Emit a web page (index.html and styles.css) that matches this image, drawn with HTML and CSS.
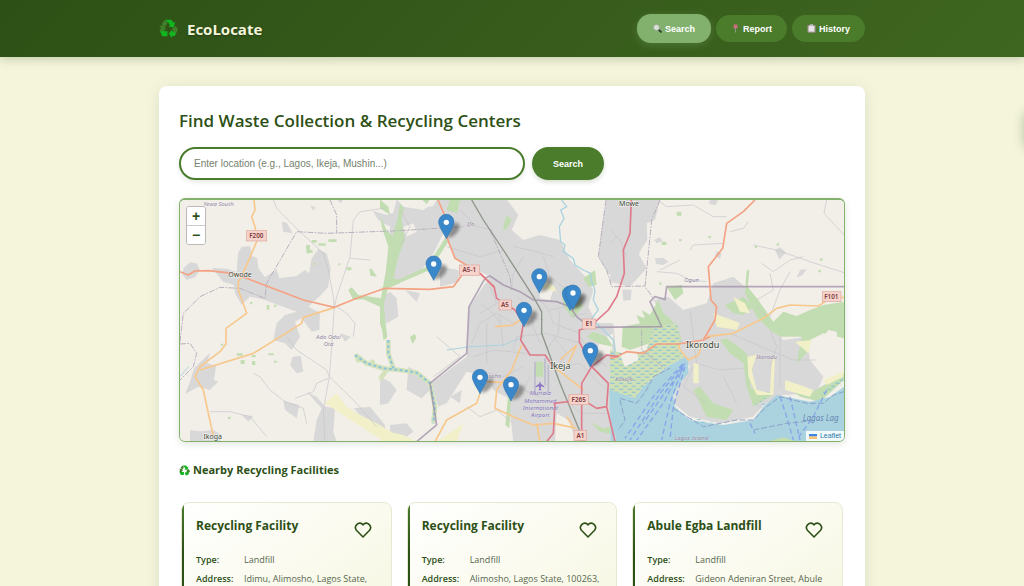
FILE: index.html
```html
<!DOCTYPE html>
<html lang="en">
<head>
<meta charset="utf-8">
<meta name="viewport" content="width=device-width, initial-scale=1">
<title>EcoLocate</title>
<link rel="stylesheet" href="styles.css">
</head>
<body>
<svg class="defs" width="0" height="0" aria-hidden="true">
  <symbol id="recycle" viewBox="0 0 20 20">
    <path fill="#12b51f" d="M6 .8h7l2.200 3.200 2-.8-1.900 5.800-5.400-1 1.700-1.300L9.600 3.600z"/>
    <path class="shade" d="M5.500 1.300 9 3.300 6.900 7.800 3 5.400z"/>
    <path fill="#12b51f" d="M.6 12.200 3.400 18.200h5.500v-5.400H5l1.300-2z"/>
    <path class="shade" d="M.2 7.400 5.500 6.200 7.200 11.500 5.300 10.600 3.800 13.400 1 12.500 1.900 8.600z"/>
    <path fill="#12b51f" d="m10.200 15.400 3.600-4.400v2.100h4.900l-2.100 4.900h-2.800v2z"/>
    <path class="shade" d="m13.700 9.800 4-2.500 2.300 4.200-1.900 2.800h-2.700z"/>
  </symbol>
  <symbol id="heart" viewBox="0 0 24 24">
    <path fill="none" stroke="currentColor" stroke-width="2.100" stroke-linejoin="round" d="M12 21.300 3.200 12.300A5.700 5.700 0 0 1 11.200 4.300L12 5.200l.8-.9a5.700 5.700 0 0 1 8 8z"/>
  </symbol>
</svg>

<div class="page">
  <header class="header">
    <div class="header-inner">
      <div class="logo"><svg class="logo-icon" aria-hidden="true"><use href="#recycle"/></svg><span>EcoLocate</span></div>
      <nav class="nav">
        <button class="nav-btn active" type="button">
          <svg class="emoji" viewBox="0 0 20 20" aria-hidden="true"><path d="m12 12 5.500 5.500" stroke="#2d3a2a" stroke-width="4" stroke-linecap="round"/><circle cx="7.800" cy="7.800" r="6.800" fill="#d9e0d6" stroke="#8c9a88" stroke-width="1.500"/></svg>
          Search</button>
        <button class="nav-btn" type="button">
          <svg class="emoji" viewBox="0 0 20 20" aria-hidden="true"><path d="M10 8v11" stroke="#8fa08a" stroke-width="2"/><path d="M5 1h10l-1.500 3 2 5.500h-11l2-5.500z" fill="#cf6a80"/></svg>
          Report</button>
        <button class="nav-btn" type="button">
          <svg class="emoji" viewBox="0 0 20 20" aria-hidden="true"><rect x="1" y="2" width="18" height="17.500" rx="1.500" fill="#a08d88"/><rect x="3.500" y="4.500" width="13" height="12.500" fill="#e6e6ea"/><rect x="6" y=".5" width="8" height="4" rx="1" fill="#b9bcc0"/></svg>
          History</button>
      </nav>
    </div>
  </header>

  <main class="panel">
    <h1 class="title">Find Waste Collection &amp; Recycling Centers</h1>
    <form class="search">
      <input class="search-input" type="text" aria-label="Location" placeholder="Enter location (e.g., Lagos, Ikeja, Mushin...)">
      <button class="search-btn" type="button">Search</button>
    </form>

    <div class="map">
      <svg class="map-art" viewBox="30 30 1992 723" preserveAspectRatio="xMidYMid slice" role="img" aria-label="Map of facilities around Ikeja">
        <defs>
          <pattern id="marsh" width="26" height="18" patternUnits="userSpaceOnUse"><path d="M1 4h12M14 13h11" stroke="#7fbedc" stroke-width="3"/></pattern>
          <filter id="soft" x="-50%" y="-50%" width="200%" height="200%"><feGaussianBlur stdDeviation="5"/></filter>
          <g id="pin">
            <path d="M0-2 18-44Q34-54 40-38 40-20 18-6z" fill="#333" opacity=".45" filter="url(#soft)"/>
            <path d="M0 0C-3-9-23-35-23-50a23 23 0 0 1 46 0C23-35 3-9 0 0z" fill="#3a88ca" stroke="#2f76b2" stroke-width="2"/>
            <circle cy="-49" r="8" fill="#fff"/>
          </g>
        </defs>
        <rect x="0" y="0" width="2060" height="790" fill="#f2efe9"/>

        <g class="urban">
          <path d="M40 235 60 217 80 220 90 240 75 262 50 270 38 255zM125 234 170 236 200 245 204 190 215 170 240 168 247 198 262 205 265 235 285 262 320 238 328 265 380 258 405 240 417 250 425 205 445 178 470 190 482 235 475 290 450 318 415 350 450 368 448 420 425 425 395 385 375 395 390 440 365 480 345 460 310 450 320 400 345 375 380 365 285 330 240 320 215 345 195 310 192 285 160 275z"/>
          <path d="M335 95 350 98 368 130 340 125zM608 62 650 75 680 65 695 85 690 120 650 105 625 90zM665 165 690 160V265L665 262zM635 320 660 305 680 325 685 380 650 400 635 370zM72 535 120 488 112 520 138 528 132 570 145 575 118 600 85 590 45 612 60 575zM368 500 392 498 400 545 380 550 360 525zM340 632 388 645 380 685 345 660zM215 675 250 678 235 695zM410 605 440 620 465 650 495 655 490 725 500 755H430L440 690 455 655zM552 655 600 650 645 705 650 740 620 740zM60 720 90 724 130 720 155 735 150 755H60zM510 430 543 440 525 455zM500 28h20l-8 12zM420 45l18 8-10 8z"/>
        </g>
        <g class="urban" transform="translate(630 0)">
          <path d="M30 110 50 28 70 50 130 60 175 28H380L415 75 395 120 430 150 480 135 540 150 570 210 620 265 640 300 625 350 650 400 700 400 715 560 705 755H400L385 625 340 600 330 560 260 545 200 640 175 650 155 580 260 500 268 350 330 260 225 205 190 130 160 190 115 255 20 280z"/>
          <path d="M180 230 235 240 238 275 180 290zM75 300 120 310 110 335zM85 530 130 555 150 600 125 625 80 600zM0 560 30 575 50 600 25 640 0 645zM30 705 80 700 100 725 60 755H30zM210 620 245 600 240 640zM680 28H790L775 110 795 150 770 210 760 270 730 285 680 245 655 200 665 110z"/>
        </g>
        <path d="M1110 290 1150 300 1140 330 1110 325zM1290 450 1330 430 1325 495 1280 490zM1160 670 1195 690 1220 755H1155z" fill="#f2efe9"/>
        <path d="M750 28h50l-10 20-30 5zM700 110l30-10 10 25-30 15z" fill="#f2efe9"/>
        <g class="urban" transform="translate(1320 0)">
          <path d="M0 28H150L135 90 110 100 112 150 85 190 110 235 60 290 0 275zM130 330 175 320 220 360 290 340 310 280 370 260 410 295 425 340 480 400 520 450 590 440 600 510 640 560 620 610 520 615 460 645 430 680 330 700 240 680 190 640 200 590 240 530 200 460 180 420 160 380zM135 205 160 203 175 215 160 225 138 222zM132 150l18-8 8 12-18 6zM495 180l15-8 18 15-20 22zM570 240l20-3-12 18-18 8zM300 28h25l-8 18-20-5zM320 183l15 8-5 15-15-8zM37 298 65 300 62 330 40 332z"/>
        </g>

        <g class="green">
          <path d="M632 80 650 120 668 140 690 60 705 150 685 200 670 265 690 270V280L655 295 640 330 650 440 640 450 630 350 580 328 550 330 535 300 545 292 565 315 635 325 652 290 648 240 655 170 635 110zM598 235l8 3 15 22-20-3z"/>
          <path d="M408 165h12v25h-10zM425 150h15v8h-15zM445 160h22v7h-22zM475 148h25v8h-25zM420 180h8v8h-8zM505 220h6v6h-6zM530 232h14v9h-14zM240 336h7v7h-7zM290 345h8v14h-8zM312 344h8v6h-8zM200 490h18v7h-18zM212 510h12v12h-12zM245 495h12v7h-12zM246 513h10v12h-10zM295 490h16v6h-16zM312 512h8v6h-8zM152 461h8v6h-8zM174 680h8v7h-8zM430 218h6v8h-6z"/>
          <g transform="translate(630 0)">
            <path d="M60 40 72 55 58 120 48 170 36 240 24 290 10 350 22 440 15 450 0 400V340L20 230 40 130 52 90zM210 28H240L232 70 200 60zM125 28h25l-10 15zM0 295 140 230 195 145 205 155 150 240 60 278zM380 75 395 90 378 120 368 115zM0 28 25 50 30 75 0 55zM545 295 590 300 610 350 580 385 550 350zM610 265 645 240 650 285 625 290zM465 515H490V560H465zM620 440l20-15 40 15 20 30-40-8zM630 695l40 20 40-10v30l-50-10zM90 440l15-8 4 12-12 18zM385 605l8 20-5 90-12-10z"/>
          </g>
          <g transform="translate(1320 0)">
            <path d="M38 410 90 400 78 375 105 385 95 360 120 375 145 330 160 370 185 390 200 420 180 440 120 460 60 480 35 470zM410 240 418 242 413 290 445 330 490 395 520 365 560 378 600 360 640 345 702 335V445L640 430 600 450 590 490 560 520 575 440 510 440 480 420 440 380 405 310zM345 345 400 320 430 350 400 375 370 370zM170 290 215 285 220 310 195 330zM330 450 350 445 400 480 430 520 420 590 450 610 490 605 480 620 430 650 410 590 400 520 360 490zM530 590 600 610 702 550V570L630 635 570 620zM250 600l20-10 40 50 60 20-20 30-60-10zM200 65h14v12h-14zM155 155h14v10h-14zM207 147h8v7h-8zM295 138h8v7h-8zM630 205h8v7h-8zM625 240h8v7h-8zM500 160h7v7h-7zM435 168h6v6h-6zM148 277h6v8h-6z"/>
          </g>
        </g>
        <g fill="#f1f0c8">
          <path d="M465 640 500 610 530 650 560 670 620 700 690 740 680 755 620 740 550 695z"/>
          <path d="M1110 270 1150 285 1160 305 1120 295zM630 720 700 735 740 755H630zM830 735 880 700 860 755H800z"/>
          <path transform="translate(1320 0)" d="M310 370 340 380 390 400 380 420 320 410zM370 320 405 340 420 370 390 365zM412 500 440 495 425 540 440 600 480 610 485 510 495 500 490 615 440 615 415 560zM525 570 570 585 610 600 600 620 525 600zM250 520h16v60h-16zM555 455l50-5-10 40zM640 570l60-25v15l-50 25z"/>
        </g>
        <path transform="translate(1320 0)" d="M640 440 655 420 680 425 682 455 702 460V530L670 525 662 495 635 475z" fill="#f2efe9"/>

        <g transform="translate(1320 0)">
          <path d="M0 590 60 620 100 590 170 530 225 500 235 515 235 550 205 585 190 620 195 650 240 690 340 705 430 690 460 650 500 615 600 635 660 620 702 590V755H18V690L0 650z" fill="#aad3df"/>
          <path d="M0 480 60 495 110 480 130 410 200 400 215 450 205 480 225 500 170 530 100 590 75 625 0 600z" fill="#cfdfb6"/>
          <path d="M0 480 60 495 110 480 130 410 200 400 215 450 205 480 225 500 170 530 100 590 75 625 0 600zM435 645l40-30-15 40zM630 610l72-50v20l-60 40zM230 680l90 15-60 5z" fill="url(#marsh)"/>
          <path d="M30 495 80 480 85 510 45 530z" fill="#f2efe9"/>
          <path d="M0 690 18 720V755H0z" fill="#d9d7d8"/>
          <path d="M470 755 520 742 560 755z" fill="#c5dcae"/>
        </g>
        <path d="M1318 600 1345 640 1335 755H1322z" fill="#aad3df"/>
        <g fill="none">
          <path d="M555 495 590 520 640 535 690 540 740 548 780 580 795 650 790 700M560 515 575 500M610 510 600 530M630 568 650 540M655 450 655 490 670 535" stroke="#d3e2bb" stroke-width="14"/>
          <path d="M555 495 590 520 640 535 690 540 740 548 780 580 795 650 790 700M655 450 655 490 670 535" stroke="#8bc3dc" stroke-width="6" stroke-dasharray="9 7"/>
          <path d="M1175 30 1190 50 1172 60 1182 85 1168 110 1172 155 1185 165 1180 185 1210 205 1215 225 1240 240 1262 250 1265 275 1275 300 1270 330 1285 360 1265 385 1290 410 1310 430 1330 450 1335 480 1330 510" stroke="#aad3df" stroke-width="4"/>
          <path d="M830 480 900 470 1000 465 1060 440M30 560 55 530" stroke="#aad3df" stroke-width="3"/>
        </g>
        <g class="ferry">
          <path d="M1545 520 1470 610 1380 750M1538 522 1450 620 1365 745M1540 525 1500 640 1475 750M1545 530 1510 650 1500 750M1535 530 1480 640 1400 750M1541 535 1490 600 1420 700M1830 620 1850 680 1870 750M1860 620 1890 750M1970 600 1930 680 1880 750M1740 700l15 30"/>
        </g>
        <path d="M1350 625 1400 640 1430 600 1450 560 1500 535M1350 630 1365 690 1345 720M1510 655 1600 710 1700 690 1750 690 1790 650 1830 620 1910 640 1960 640 1990 615 2022 605M1750 720 1850 700 1950 690" fill="none" stroke="#8697c5" stroke-width="2.500" stroke-dasharray="18 6"/>

        <g class="minor">
          <path d="M310 28 320 55 385 120 460 190 475 240 490 320 493 352 485 470 478 560 460 660 465 755M493 352 500 320 540 200 550 90 570 65 640 55M350 440 380 480 470 540 478 560 560 640 620 710M250 550 270 560 300 600 345 635 400 655 410 700M375 625 430 605 440 580 475 565M120 665 180 665 240 680 290 740M500 350 530 370 555 400 550 440M540 205 600 210"/>
          <path transform="translate(630 0)" d="M275 460 300 400 350 370 400 400 450 380 490 390M280 500 340 480 440 490 480 500M300 340 340 370 360 400M440 300 500 350 520 400 600 430M490 200 510 260 560 300M400 170 450 180 520 200M170 440 240 500 160 560M260 650 300 680 350 660 400 700M200 170 300 200 370 180M410 320 450 350 460 410 480 460M540 360 535 430 500 480M600 440 640 500 680 530M400 480 410 440 500 430 600 460M540 530 600 520 680 600M560 630 600 670 680 670M430 200 400 250 395 290M510 360 560 350M330 290 350 340 300 370M290 540 370 560 430 530M450 560 430 600 480 620M240 60 290 110 340 120M690 120 720 150 740 200M60 60 90 110 60 170M320 400 320 520M360 380 370 470M520 440 560 490 540 520M570 380 620 370"/>
          <path transform="translate(1320 0)" d="M150 35 170 50 250 45 310 80 350 80M210 210 150 240M240 180 250 165 340 160M360 125 400 115 415 95M430 165 500 180 600 215 702 248M455 220 490 245 540 210 580 200M480 250 490 300 440 330M540 245 510 300 480 380M650 28 642 70 702 135M140 245 200 250 240 270 290 275M240 360 260 520 330 540 400 535M360 430 430 460 550 510 620 510M480 420 500 470 480 530M250 530 220 590 290 640M340 560 380 640M510 440 510 590M440 350 470 380M0 160 20 140"/>
        </g>
        <g class="boundary">
          <path d="M30 462 60 460 80 490 70 530 30 570M30 455 40 370 90 320 150 292 210 295 285 325 290 280 380 125 470 130 690 122 880 110M480 30 500 75V130"/>
          <path d="M1308 30 1285 200 1310 240 1325 290 1425 288M1470 30 1445 90 1425 290 1450 325M1415 420V480L1490 540M960 120 1020 260 1025 300"/>
        </g>
        <g fill="none" stroke="#9f8fa8" stroke-width="5">
          <path d="M740 755 800 705 780 580 890 490 897 350 945 265 960 258 1000 285 1050 305 1090 330 1160 335 1200 350 1220 380 1260 412 1475 410 1440 335 1455 320 1485 328 1490 290H2022" opacity=".75"/>
        </g>
        <path d="M905 30 940 90 1000 180 1090 320 1115 365V430L1170 580 1230 725" fill="none" stroke="#8d968a" stroke-width="4"/>

        <g class="secondary">
          <path d="M252 28 255 60 245 80 255 110 262 150 215 260 205 275 205 300 230 370 168 415V462L150 485 90 530 75 560 100 600 130 740M90 540 250 490 395 400 400 382 495 352"/>
          <path transform="translate(630 0)" d="M345 410 400 405 425 385M425 465 395 540 350 600 345 655 400 680 460 705 520 700 590 715M320 575 380 578M300 610 290 640 200 690 165 755M520 530 560 560 610 600M540 510 590 465M470 700 480 755M560 680 580 710M590 465 560 530"/>
          <path transform="translate(1320 0)" d="M290 440 370 430 460 385 500 355 540 345 625 348 660 325 702 322M205 460 210 480 235 510 265 495 275 465"/>
        </g>
        <g class="primary">
          <path d="M30 245 55 255 75 243 115 242 190 250 400 330 493 352 560 325 645 295 780 298 850 290 880 250"/>
          <path d="M803 28 830 90 830 140 855 205 930 250 975 295"/>
          <path transform="translate(1320 0)" d="M435 30 400 65 350 100 338 175 295 230 303 330 320 350 315 390 280 450 205 462 140 462 100 490 50 485 10 505 0 502M280 450 300 440"/>
        </g>
        <g class="trunk">
          <path d="M930 250 972 290 980 325 1035 360 1060 400 1052 450 1080 495 1125 495 1150 530M1384 28 1380 130 1360 180 1363 250 1340 320 1315 360 1260 410 1228 420 1228 455 1265 530 1315 580 1310 650 1335 755M1265 530 1235 580V755M1265 530 1310 495 1345 500M1150 640 1240 630 1280 655 1310 650M1130 755 1150 730 1155 640"/>
        </g>
        <path d="M1095 515v100M1125 505v80M1135 525v80" fill="none" stroke="#bbbbcc" stroke-width="5"/>
        <path d="M1110 574l3 8 10 7v3l-10-3-1 8 3 4h-10l3-4-1-8-10 3v-3l10-7z" fill="#8a72c4"/>

        <g class="shields">
          <rect x="229" y="122" width="61" height="31"/><rect x="868" y="225" width="60" height="31"/><rect x="987" y="330" width="37" height="30"/><rect x="1237" y="387" width="40" height="30"/><rect x="1197" y="614" width="58" height="30"/><rect x="1212" y="721" width="38" height="30"/><rect x="1957" y="305" width="56" height="30"/>
        </g>
        <g class="shield-text">
          <text x="259" y="144">F200</text><text x="898" y="247">A5-1</text><text x="1005" y="351">A5</text><text x="1257" y="409">E1</text><text x="1226" y="636">F265</text><text x="1231" y="743">A1</text><text x="1984" y="327">F101</text>
        </g>
        <g class="place">
          <text x="210" y="262">Owode</text><text x="128" y="747">Ikoga</text><text x="1377" y="48">Mowe</text>
          <text class="city" x="1171" y="536">Ikeja</text><text class="city" x="1598" y="475">Ikorodu</text>
        </g>
        <g class="region">
          <text x="146" y="47">Yewa South</text><text x="476" y="447">Ado Odo/</text><text x="476" y="468">Ota</text><text x="902" y="108">Ifo</text><text x="957" y="563">Alimosho</text><text x="1565" y="277">Ogun</text><text x="1362" y="574">Kosofe</text><text x="1790" y="508">Ikorodu</text><text x="1564" y="750">Lagos Island</text>
          <g class="airport"><text x="1111" y="616">Murtala</text><text x="1111" y="638">Mohammed</text><text x="1111" y="660">International</text><text x="1111" y="682">Airport</text></g>
          <text class="lagoon" x="1898" y="692">Lagos Lag</text>
        </g>
        <g>
          <use href="#pin" x="829" y="146"/><use href="#pin" x="791" y="271"/><use href="#pin" x="1108" y="309"/><use href="#pin" x="1200" y="361"/><use href="#pin" x="1209" y="358"/><use href="#pin" x="1062" y="410"/><use href="#pin" x="1261" y="531"/><use href="#pin" x="930" y="611"/><use href="#pin" x="1023" y="633"/>
        </g>
      </svg>
      <div class="zoom">
        <button type="button" aria-label="Zoom in">+</button>
        <button type="button" aria-label="Zoom out">−</button>
      </div>
      <a class="leaflet" href="#leaflet"><svg class="flag" viewBox="0 0 12 8" preserveAspectRatio="none" aria-hidden="true"><path fill="#3f86d8" d="M0 0h12v4H0z"/><path fill="#f3c47a" d="M0 4h12v4H0z"/></svg>Leaflet</a>
    </div>

    <h2 class="subtitle"><svg class="sub-icon" aria-hidden="true"><use href="#recycle"/></svg>Nearby Recycling Facilities</h2>

    <div class="cards">
      <article class="card">
        <div class="card-head"><h3>Recycling Facility</h3><button class="fav" type="button" aria-label="Save facility"><svg><use href="#heart"/></svg></button></div>
        <dl><dt>Type:</dt><dd>Landfill</dd><dt>Address:</dt><dd>Idimu, Alimosho, Lagos State,</dd></dl>
      </article>
      <article class="card">
        <div class="card-head"><h3>Recycling Facility</h3><button class="fav" type="button" aria-label="Save facility"><svg><use href="#heart"/></svg></button></div>
        <dl><dt>Type:</dt><dd>Landfill</dd><dt>Address:</dt><dd>Alimosho, Lagos State, 100263,</dd></dl>
      </article>
      <article class="card">
        <div class="card-head"><h3>Abule Egba Landfill</h3><button class="fav" type="button" aria-label="Save facility"><svg><use href="#heart"/></svg></button></div>
        <dl><dt>Type:</dt><dd>Landfill</dd><dt>Address:</dt><dd>Gideon Adeniran Street, Abule</dd></dl>
      </article>
    </div>
  </main>
  <aside class="drawer" aria-hidden="true"></aside>
</div>
</body>
</html>
```
FILE: styles.css
```css
* { box-sizing: border-box; }
body { margin: 0; background: #f5f5dc; color: #2d5016; font-family: "Open Sans", sans-serif; }
h1, h2, h3, dl, dd { margin: 0; }
button { font-family: "Liberation Sans", sans-serif; cursor: pointer; }
.defs { position: absolute; }
.shade { fill: #41802b; }
.page { position: relative; height: 100vh; overflow: hidden auto; scrollbar-width: none; }

.header { padding: 14px 20px; background: linear-gradient(135deg, #2d5016, #3f6620); box-shadow: 0 2px 10px rgba(45, 80, 22, .25); }
.header-inner { display: flex; align-items: center; justify-content: space-between; max-width: 706px; margin: 0 auto; }
.logo { display: flex; align-items: center; gap: 9px; color: #f5f5dc; font-size: 15px; font-weight: 700; text-shadow: 0 1px 2px rgba(0, 0, 0, .3); }
.logo-icon { width: 19px; height: 19px; }
.nav { display: flex; align-items: center; gap: 5px; }
.nav-btn { display: flex; align-items: center; gap: 3px; height: 27px; padding: 0 15px; border: 0; border-radius: 14px; background: #4a7c2c; color: #fff; font-size: 9px; font-weight: 700; }
.nav-btn.active { height: 29px; padding: 0 16px; background: #82b16d; box-shadow: 0 2px 8px rgba(130, 177, 109, .3); }
.emoji { width: 9px; height: 9px; fill: none; }

.panel { max-width: 706px; margin: 29px auto; padding: 20px; border-radius: 8px; background: #fff; box-shadow: 0 2px 15px rgba(45, 80, 22, .12); }
.title { margin-bottom: 11px; font-size: 17px; line-height: 30px; font-weight: 650; }
.search { display: flex; gap: 7px; margin-bottom: 18px; }
.search-input { width: 346px; height: 33px; padding: 0 13px; border: 2px solid #4a7c2c; border-radius: 17px; background: #fff; font: 10px "Liberation Sans", sans-serif; color: #2d5016; box-shadow: 0 2px 5px rgba(45, 80, 22, .12); }
.search-input::placeholder { color: #74826b; opacity: 1; }
.search-btn { height: 33px; padding: 0 21px; border: 0; border-radius: 17px; background: #4a7c2c; color: #fff; font-size: 9px; font-weight: 700; box-shadow: 0 2px 5px rgba(45, 80, 22, .2); }

.map { position: relative; height: 244px; border: 1px solid #82b16d; border-top-width: 2px; border-radius: 6px; overflow: hidden; box-shadow: 0 2px 7px rgba(45, 80, 22, .15); }
.map-art { display: block; width: 100%; height: 100%; font-family: "Noto Sans", sans-serif; }
.urban { fill: #d9d8d8; }
.green { fill: #c3ddb2; }
.minor { fill: none; stroke: #c6c4c9; stroke-width: 2; }
.boundary { fill: none; stroke: #b9b1bf; stroke-width: 3; stroke-dasharray: 18 4 5 4; }
.secondary { fill: none; stroke: #f7c88c; stroke-width: 5; stroke-linejoin: round; }
.primary { fill: none; stroke: #f4a283; stroke-width: 5; stroke-linejoin: round; }
.trunk { fill: none; stroke: #df7b8b; stroke-width: 5; stroke-linejoin: round; }
.ferry { fill: none; stroke: #86a6ea; stroke-width: 4; stroke-dasharray: 16 9; }
.shields { fill: #f5d3cb; stroke: #dda79c; stroke-width: 2; }
.shield-text { fill: #803a3c; font-size: 19px; font-weight: 600; text-anchor: middle; }
.place { fill: #3c4a37; font-size: 21px; text-anchor: middle; stroke: #fff; stroke-opacity: .6; stroke-width: 4px; paint-order: stroke; }
.city { font-size: 27px; }
.region { fill: #91859f; font-size: 18px; font-style: italic; text-anchor: middle; stroke: #fff; stroke-opacity: .4; stroke-width: 2px; paint-order: stroke; }
.airport { fill: #7d6fb5; }
.lagoon { fill: #6887b5; font-size: 24px; text-anchor: start; stroke: none; }

.zoom { position: absolute; top: 6px; left: 6px; display: flex; flex-direction: column; border: 1px solid #bdb9b8; border-radius: 3px; background: #fff; overflow: hidden; }
.zoom button { width: 18px; height: 18px; padding: 0; border: 0; background: #fff; color: #2d5016; font-size: 14px; line-height: 18px; font-weight: 700; }
.zoom button + button { height: 19px; border-top: 1px solid #ccc; }
.leaflet { position: absolute; right: 0; bottom: 0; display: flex; align-items: center; gap: 3px; padding: 0 3px; background: rgba(255, 255, 255, .85); color: #2478a8; font: 7px/10px "Liberation Sans", sans-serif; text-decoration: none; }
.flag { width: 8px; height: 5px; }

.subtitle { display: flex; align-items: center; gap: 3px; margin: 18px 0 20px; font-size: 11px; line-height: 20px; font-weight: 700; }
.sub-icon { width: 11px; height: 11px; }
.sub-icon .shade { fill: #12b51f; }
.cards { display: grid; grid-template-columns: repeat(3, 1fr); gap: 15px; padding: 2px; }
.card { position: relative; min-height: 170px; padding: 13px 14px; border: 1px solid #e9e9d3; border-radius: 8px; background: linear-gradient(145deg, #fff, #f5f5dc); overflow: hidden; }
.card::before { content: ""; position: absolute; inset: 0 auto 0 0; width: 2px; background: linear-gradient(#4a7c2c, #2d5016 30%); }
.card-head { display: flex; justify-content: space-between; margin-bottom: 15px; }
.card h3 { font-size: 12px; line-height: 20px; font-weight: 700; }
.fav { display: flex; align-self: flex-start; margin-top: 5px; padding: 0 5px; border: 0; background: none; color: #2d5016; }
.fav svg { width: 18px; height: 18px; }
.card dl { display: grid; grid-template-columns: 48px 1fr; row-gap: 7px; font-size: 9px; line-height: 12px; }
.card dt { font-weight: 600; }
.card dd { color: #56664c; white-space: nowrap; }
.drawer { position: absolute; top: 109px; right: -60px; width: 60px; height: 38px; border-radius: 8px; box-shadow: 0 2px 12px rgba(45, 80, 22, .3); }
```
